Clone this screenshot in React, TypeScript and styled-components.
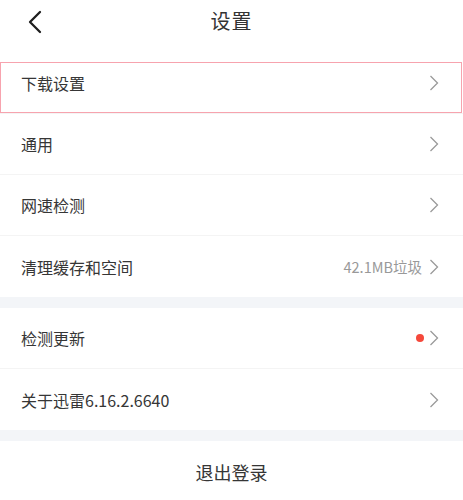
import * as React from 'react';
import styled, { createGlobalStyle } from 'styled-components';

const GlobalStyle = createGlobalStyle`
    html, body {
        margin: 0;
        padding: 0;
        background: #ffffff;
    }
    body {
        font-family: "Noto Sans CJK SC", "Noto Sans", sans-serif;
        color: #333;
        -webkit-font-smoothing: antialiased;
    }
`;

type Item = {
    id: string;
    label: string;
    extra?: string;
    dot?: boolean;
    highlighted?: boolean;
};

const groups: Item[][] = [
    [
        { id: 'download', label: '下载设置', highlighted: true },
        { id: 'general', label: '通用' },
        { id: 'speed', label: '网速检测' },
        { id: 'clean', label: '清理缓存和空间', extra: '42.1MB垃圾' },
    ],
    [
        { id: 'update', label: '检测更新', dot: true },
        { id: 'about', label: '关于迅雷6.16.2.6640' },
    ],
];

const Chevron = () => (
    <svg width="10" height="16" viewBox="0 0 10 16" fill="none">
        <path d="M1.5 1 L8.5 8 L1.5 15" stroke="#9a9a9a" strokeWidth="1.3" strokeLinejoin="miter" />
    </svg>
);

const BackIcon = () => (
    <svg width="15" height="24" viewBox="0 0 15 24" fill="none">
        <path d="M13 2 L3 12 L13 22" stroke="#1f1f1f" strokeWidth="2.3" strokeLinecap="round" strokeLinejoin="round" />
    </svg>
);

const App: React.FC = () => {
    return (
        <Page>
            <GlobalStyle />
            <Header>
                <BackButton>
                    <BackIcon />
                </BackButton>
                <Title>设置</Title>
                <span />
            </Header>
            {groups.map((group, gi) => (
                <React.Fragment key={gi}>
                    <Group>
                        {group.map((e) => (
                            <Row key={e.id} $highlighted={e.highlighted}>
                                <Label>{e.label}</Label>
                                <Trail>
                                    {e.extra && <Extra>{e.extra}</Extra>}
                                    {e.dot && <Dot />}
                                    <Chevron />
                                </Trail>
                            </Row>
                        ))}
                    </Group>
                    <Band />
                </React.Fragment>
            ))}
            <Logout>退出登录</Logout>
        </Page>
    );
};

const Page = styled.div`
    width: 463px;
    background: #fff;
`;

const Header = styled.header`
    height: 53px;
    padding-bottom: 11px;
    box-sizing: border-box;
    display: grid;
    grid-template-columns: 1fr auto 1fr;
    align-items: center;
`;

const BackButton = styled.div`
    display: flex;
    align-items: center;
    padding-left: 27px;
    padding-top: 1px;
`;

const Title = styled.h1`
    margin: 0;
    font-size: 20px;
    font-weight: 400;
    color: #333;
    letter-spacing: 1px;
    line-height: 1;
`;

const Group = styled.section`
    display: flex;
    flex-direction: column;
`;

const Row = styled.div<{ $highlighted?: boolean }>`
    position: relative;
    height: 61px;
    box-sizing: border-box;
    display: flex;
    align-items: center;
    justify-content: space-between;
    padding: 0 24px 0 21px;
    border-bottom: 1px solid #f4f4f4;
    &:last-child {
        border-bottom: none;
    }
    &::after {
        content: '';
        display: ${(p) => (p.$highlighted ? 'block' : 'none')};
        position: absolute;
        top: 9px;
        left: 0;
        right: 1px;
        bottom: 0;
        border: 1.5px solid #f7a3ae;
        pointer-events: none;
    }
`;

const Label = styled.span`
    font-size: 16px;
    color: #363636;
    line-height: 1;
`;

const Trail = styled.div`
    display: flex;
    align-items: center;
`;

const Extra = styled.span`
    font-size: 14.5px;
    color: #999;
    margin-right: 7px;
`;

const Dot = styled.span`
    width: 8px;
    height: 8px;
    border-radius: 50%;
    background: #f5483b;
    margin-right: 5px;
`;

const Band = styled.div`
    height: 11px;
    background: #f3f5f8;
`;

const Logout = styled.div`
    height: 61px;
    display: flex;
    align-items: center;
    justify-content: center;
    font-size: 18px;
    color: #363636;
`;

export default App;
